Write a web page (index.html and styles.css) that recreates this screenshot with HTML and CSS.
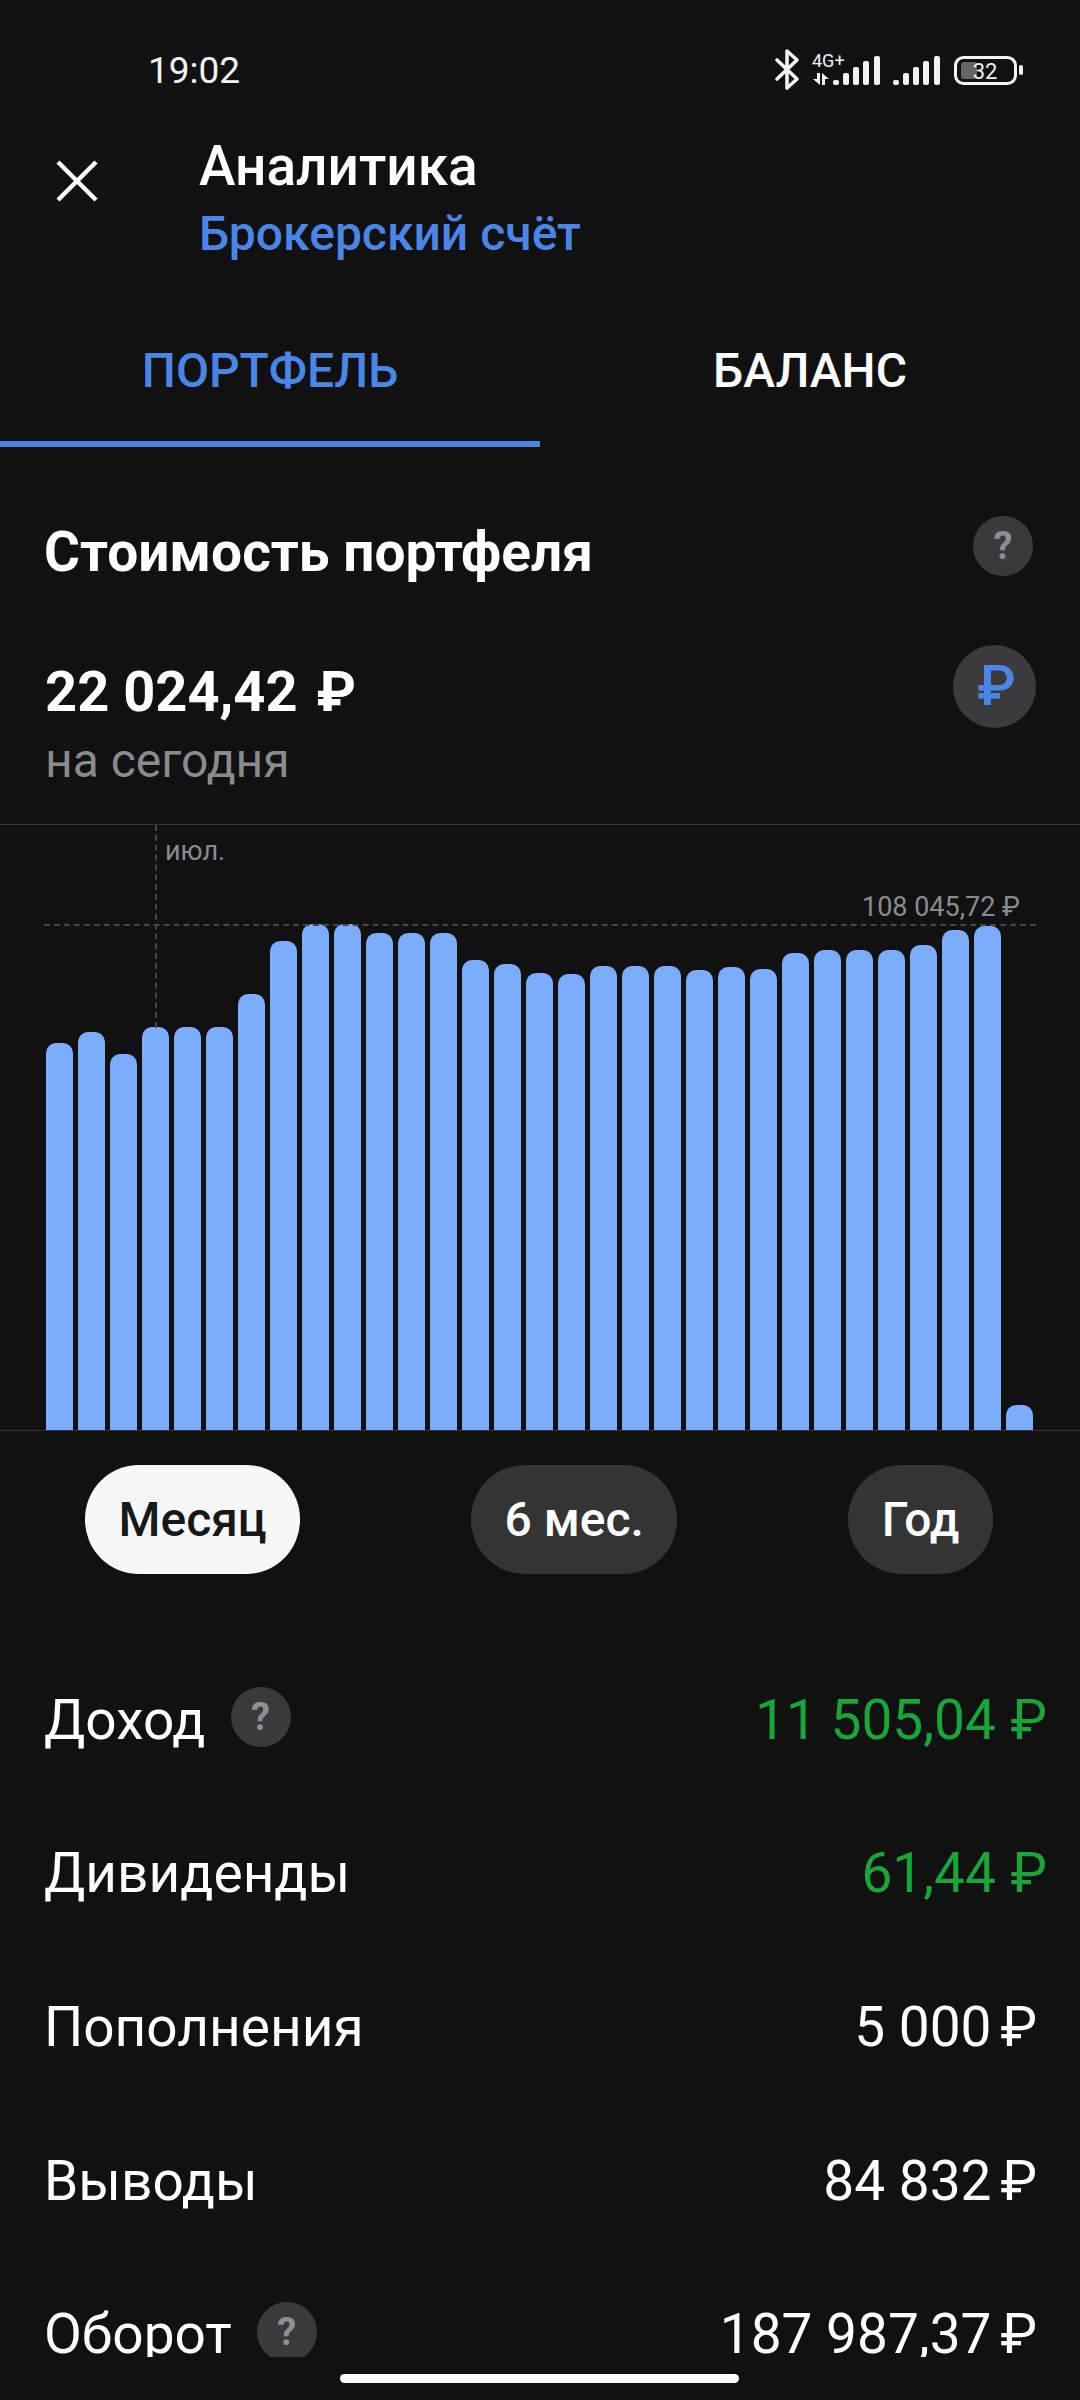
FILE: index.html
```html
<!DOCTYPE html>
<html lang="ru">
<head>
  <meta charset="UTF-8">
  <meta name="viewport" content="width=device-width, initial-scale=1.0">
  <title>Аналитика</title>
  <link rel="stylesheet" href="styles.css">
</head>
<body>
  <div class="screen">
    <div class="status-bar">
      <span class="clock">19:02</span>
      <svg class="status-icons" width="256" height="44" viewBox="772 48 256 44">
        <path d="M777 60l20 19-10 9V51l10 9-20 19" fill="none" stroke="#f2f2f2" stroke-width="3.6" stroke-linecap="round" stroke-linejoin="round"/>
        <text x="812" y="67" class="status-small">4G+</text>
        <path d="M817 73h3v12l-7-6h4zM822 85h3v-6h4l-7-6z" fill="#f2f2f2"/>
        <g fill="#f2f2f2">
          <rect x="833" y="80" width="6" height="5" rx="2"/>
          <rect x="843" y="73" width="6" height="12" rx="2"/>
          <rect x="853" y="67" width="6" height="18" rx="2"/>
          <rect x="863" y="61" width="6" height="24" rx="2"/>
          <rect x="874" y="56" width="6" height="29" rx="2"/>
          <rect x="893" y="80" width="6" height="5" rx="2"/>
          <rect x="903" y="73" width="6" height="12" rx="2"/>
          <rect x="913" y="67" width="6" height="18" rx="2"/>
          <rect x="923" y="61" width="6" height="24" rx="2"/>
          <rect x="934" y="56" width="6" height="29" rx="2"/>
        </g>
        <rect x="955.5" y="57.5" width="60" height="26" rx="8" fill="none" stroke="#f2f2f2" stroke-width="3"/>
        <rect x="961" y="62" width="16" height="17" rx="3" fill="#666"/>
        <rect x="1019" y="65" width="4" height="10" rx="2" fill="#f2f2f2"/>
        <text x="985" y="79" class="status-level">32</text>
      </svg>
    </div>

    <div class="top-bar">
      <svg class="close-icon" width="42" height="42" viewBox="0 0 42 42">
        <path d="M2 2l38 38M40 2L2 40" stroke="#fff" stroke-width="4.4" fill="none"/>
      </svg>
      <div class="top-titles">
        <div class="page-title">Аналитика</div>
        <div class="page-subtitle">Брокерский счёт</div>
      </div>
    </div>

    <div class="tabs">
      <div class="tab tab-active">ПОРТФЕЛЬ</div>
      <div class="tab">БАЛАНС</div>
    </div>

    <div class="section-head">
      <h2 class="section-title">Стоимость портфеля</h2>
      <span class="help">?</span>
    </div>

    <div class="total">
      <div>
        <div class="total-value">22 024,42 <span class="total-rub">₽</span></div>
        <div class="total-date">на сегодня</div>
      </div>
      <span class="currency">₽</span>
    </div>

    <div class="chart">
      <div class="bars">
        <div class="bar" style="height: 387px"></div>
        <div class="bar" style="height: 398px"></div>
        <div class="bar" style="height: 376px"></div>
        <div class="bar" style="height: 403px"></div>
        <div class="bar" style="height: 403px"></div>
        <div class="bar" style="height: 403px"></div>
        <div class="bar" style="height: 436px"></div>
        <div class="bar" style="height: 489px"></div>
        <div class="bar" style="height: 506px"></div>
        <div class="bar" style="height: 506px"></div>
        <div class="bar" style="height: 497px"></div>
        <div class="bar" style="height: 497px"></div>
        <div class="bar" style="height: 497px"></div>
        <div class="bar" style="height: 470px"></div>
        <div class="bar" style="height: 466px"></div>
        <div class="bar" style="height: 457px"></div>
        <div class="bar" style="height: 456px"></div>
        <div class="bar" style="height: 464px"></div>
        <div class="bar" style="height: 464px"></div>
        <div class="bar" style="height: 464px"></div>
        <div class="bar" style="height: 460px"></div>
        <div class="bar" style="height: 463px"></div>
        <div class="bar" style="height: 461px"></div>
        <div class="bar" style="height: 477px"></div>
        <div class="bar" style="height: 480px"></div>
        <div class="bar" style="height: 480px"></div>
        <div class="bar" style="height: 480px"></div>
        <div class="bar" style="height: 485px"></div>
        <div class="bar" style="height: 500px"></div>
        <div class="bar" style="height: 504px"></div>
        <div class="bar" style="height: 25px"></div>
      </div>
      <div class="month-line"></div>
      <div class="month-label">июл.</div>
      <div class="max-line"></div>
      <div class="max-label">108 045,72 ₽</div>
    </div>

    <div class="periods">
      <div class="period period-active">Месяц</div>
      <div class="period">6 мес.</div>
      <div class="period">Год</div>
    </div>

    <div class="stats">
      <div class="stat">
        <div class="stat-name">Доход <span class="help">?</span></div>
        <div class="stat-value stat-green">11 505,04 <span class="rub-wide">₽</span></div>
      </div>
      <div class="stat">
        <div class="stat-name">Дивиденды</div>
        <div class="stat-value stat-green">61,44 <span class="rub-wide">₽</span></div>
      </div>
      <div class="stat">
        <div class="stat-name">Пополнения</div>
        <div class="stat-value">5 000<span class="rub-thin">₽</span></div>
      </div>
      <div class="stat">
        <div class="stat-name">Выводы</div>
        <div class="stat-value">84 832<span class="rub-thin">₽</span></div>
      </div>
      <div class="stat">
        <div class="stat-name">Оборот <span class="help">?</span></div>
        <div class="stat-value">187 987,37<span class="rub-thin">₽</span></div>
      </div>
    </div>

    <div class="home-bar"></div>
  </div>
</body>
</html>
```

FILE: styles.css
```css
* {
  box-sizing: border-box;
}
html, body {
  margin: 0;
  padding: 0;
  background-color: #111112;
}
body {
  font-family: Roboto, "Noto Sans", sans-serif;
  color: #fff;
}
.screen {
  position: relative;
  width: 1080px;
  height: 2400px;
  overflow: hidden;
}

/* status bar */
.status-bar {
  display: flex;
  justify-content: space-between;
  height: 96px;
  padding: 46px 52px 0 148px;
}
.clock {
  font-size: 37px;
  line-height: 50px;
  color: #f2f2f2;
}
.status-icons {
  margin-top: 2px;
}
.status-small {
  font-size: 18px;
  fill: #f2f2f2;
}
.status-level {
  font-size: 22px;
  fill: #f2f2f2;
  text-anchor: middle;
}

/* header */
.top-bar {
  display: flex;
  align-items: flex-start;
  height: 198px;
  padding: 40px 0 0 56px;
}
.close-icon {
  margin: 24px 101px 0 0;
}
.page-title {
  font-size: 55px;
  font-weight: 500;
  line-height: 60px;
}
.page-subtitle {
  margin-top: 8px;
  font-size: 48px;
  font-weight: 500;
  line-height: 60px;
  color: #4a86e8;
}

/* tabs */
.tabs {
  display: flex;
  height: 153px;
}
.tab {
  flex: 1;
  padding-top: 50px;
  font-size: 48px;
  font-weight: 500;
  line-height: 54px;
  text-align: center;
}
.tab-active {
  color: #4a86e8;
  border-bottom: 6px solid #4a86e8;
}

/* portfolio value */
.section-head {
  display: flex;
  justify-content: space-between;
  align-items: flex-start;
  height: 163px;
  padding: 69px 47px 0 44px;
}
.section-title {
  margin: 0;
  font-size: 55px;
  font-weight: 700;
  line-height: 72px;
}
.help {
  display: inline-block;
  width: 60px;
  height: 60px;
  border-radius: 50%;
  background-color: #3a3a3c;
  color: #8e8e93;
  font-size: 38px;
  font-weight: 700;
  line-height: 60px;
  text-align: center;
}
.total {
  display: flex;
  justify-content: space-between;
  align-items: flex-start;
  height: 214px;
  padding: 35px 44px 0 45px;
}
.total-value {
  margin-top: 15px;
  font-size: 56px;
  font-weight: 700;
  line-height: 64px;
}
.total-rub {
  margin-left: 5px;
}
.total-date {
  margin-top: 9px;
  font-size: 48px;
  line-height: 56px;
  color: #8a8b8f;
}
.currency {
  width: 83px;
  height: 83px;
  padding-left: 4px;
  border-radius: 50%;
  background-color: #3b3b3d;
  color: #4a86e8;
  font-size: 56px;
  font-weight: 500;
  line-height: 83px;
  text-align: center;
}

/* chart */
.chart {
  position: relative;
  height: 607px;
  border-top: 1px solid #333436;
  border-bottom: 1px solid #333436;
}
.bars {
  display: flex;
  align-items: flex-end;
  gap: 5px;
  height: 605px;
  padding-left: 46px;
}
.bar {
  width: 27px;
  border-radius: 10px 10px 0 0;
  background-color: #7cacfc;
}
.month-line {
  position: absolute;
  top: 0;
  left: 155px;
  height: 203px;
  border-left: 2px dashed #444547;
}
.month-label {
  position: absolute;
  top: 10px;
  left: 165px;
  font-size: 27px;
  line-height: 32px;
  color: #8a8b8f;
}
.max-line {
  position: absolute;
  top: 99px;
  left: 44px;
  width: 992px;
  border-top: 2px dashed #444547;
}
.max-label {
  position: absolute;
  top: 66px;
  right: 60px;
  font-size: 27px;
  line-height: 32px;
  color: #8a8b8f;
}

/* period switch */
.periods {
  display: flex;
  justify-content: space-between;
  padding: 34px 87px 0 85px;
}
.period {
  height: 109px;
  padding: 0 33.5px;
  border-radius: 54px;
  background-color: #343434;
  font-size: 48px;
  font-weight: 500;
  line-height: 109px;
}
.period-active {
  background-color: #f6f7f8;
  color: #17181a;
}

/* stats list */
.stats {
  height: 714px;
  margin-top: 69px;
  overflow: hidden;
}
.stat {
  display: flex;
  justify-content: space-between;
  align-items: center;
  height: 153.6px;
  padding: 0 43px 0 44px;
  font-size: 55px;
}
.stat-name {
  display: flex;
  align-items: center;
}
.stat-name .help {
  margin: -5px 0 0 25px;
}
.stat-green {
  margin-right: -10px;
  color: #17a637;
}
.rub-wide {
  margin-left: 1px;
}
.rub-thin {
  margin-left: 9px;
}

.home-bar {
  position: absolute;
  left: 340px;
  top: 2374px;
  width: 399px;
  height: 9px;
  border-radius: 5px;
  background-color: #fff;
}
```
